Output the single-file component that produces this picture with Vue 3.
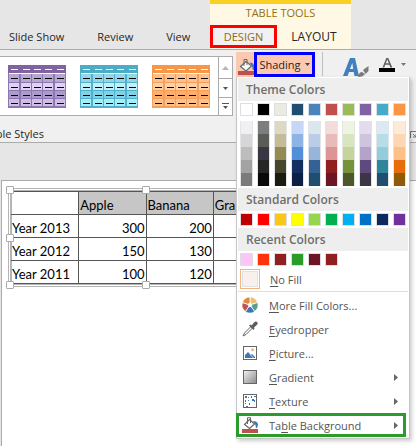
<script setup>
const tabs = ['Slide Show', 'Review', 'View']

const styles = [
  { name: 'Purple', head: '#8064a2', line: '#8f76b3', rows: ['#b7a8d0', '#ddd2f2', '#ac9bc8', '#cdbfe4'] },
  { name: 'Aqua', head: '#4bacc6', line: '#52b0cc', rows: ['#93d6e6', '#c0f0fc', '#82d2e6', '#a2f0fc'] },
  { name: 'Orange', head: '#f79646', line: '#f3a05c', rows: ['#ffc08c', '#ffcfa6', '#ffae6c', '#ffc08a'] },
]
const thumbCols = [1, 13, 24, 35, 47]
const thumbRows = [9, 18, 26, 34]

const theme = [
  { base: '#ffffff', tints: ['#f0f0f3', '#d6d6d6', '#bdbdbd', '#a3a3a3', '#7b7b7b'] },
  { base: '#000000', tints: ['#7d7d7d', '#595c57', '#3a3742', '#262626', '#0a0a0a'] },
  { base: '#ebebe0', tints: ['#dcd9c0', '#c4bc98', '#938b53', '#45462b', '#1b1c10'] },
  { base: '#1f4e70', tints: ['#c5d6f6', '#8eb4e6', '#538ed8', '#132f61', '#0c2046'] },
  { base: '#4a84bd', tints: ['#dbe7ef', '#b9cde8', '#95b6da', '#356194', '#1f4e70'] },
  { base: '#c0504d', tints: ['#f3dcd9', '#e8bab9', '#dc9594', '#911f20', '#6d1522'] },
  { base: '#9bbb59', tints: ['#edf4df', '#d7e6bd', '#c5d49b', '#76933a', '#4c5828'] },
  { base: '#8064a2', tints: ['#e4dcec', '#cdc5de', '#b3a3c9', '#5e4a7c', '#3c3545'] },
  { base: '#44abc8', tints: ['#d9eaf4', '#b7dde9', '#93cddb', '#2f869c', '#1f4e70'] },
  { base: '#fd9644', tints: ['#feead9', '#fdd6b4', '#fdc188', '#e86c0a', '#915a0a'] },
]

const standard = ['#c00000', '#ff0000', '#fac814', '#ffff00', '#96d64d', '#00b050', '#00b0f0', '#0070c6', '#0d2a5e', '#7030a0']
const recent = ['#fdc6f7', '#ff330a', '#911f20', '#2a9c2a', '#6d1522', '#911f20']

const items = [
  { icon: 'wheel', pre: '', key: 'M', post: 'ore Fill Colors...', sub: false },
  { icon: 'dropper', pre: '', key: 'E', post: 'yedropper', sub: false },
  { icon: 'picture', pre: '', key: 'P', post: 'icture...', sub: false },
  { icon: 'gradient', pre: '', key: 'G', post: 'radient', sub: true },
  { icon: 'texture', pre: '', key: 'T', post: 'exture', sub: true },
  { icon: 'bucket', pre: 'Ta', key: 'b', post: 'le Background', sub: true, marked: true },
]

const columns = ['', 'Apple', 'Banana', 'Grapes']
const records = [
  ['Year 2013', '300', '200', ''],
  ['Year 2012', '150', '130', ''],
  ['Year 2011', '100', '120', ''],
]
const handles = ['nw', 'n', 'ne', 'w', 'e', 'sw', 's', 'se']
const dots = [[2, 2], [5, 3], [8, 2], [11, 2], [2, 6], [5, 6], [9, 5], [2, 9], [6, 9], [3, 12], [11, 6]]
</script>

<template>
  <div class="app">
    <header class="tabs">
      <nav class="main-tabs">
        <button v-for="t in tabs" :key="t" class="tab" type="button">{{ t }}</button>
      </nav>
      <div class="context">
        <div class="context-title">TABLE TOOLS</div>
        <div class="context-tabs">
          <button class="ctab active" type="button">DESIGN</button>
          <button class="ctab" type="button">LAYOUT</button>
        </div>
      </div>
    </header>

    <section class="ribbon">
      <div class="styles-group">
        <div class="gallery">
          <div class="thumbs">
            <button v-for="s in styles" :key="s.name" class="thumb" type="button" :aria-label="s.name + ' table style'">
              <svg width="58" height="43" viewBox="0 0 58 43" shape-rendering="crispEdges">
                <rect width="58" height="43" :fill="s.line" />
                <rect width="58" height="8" :fill="s.head" />
                <rect x="1" y="8" width="56" height="1" fill="#fff" />
                <g v-for="(c, r) in s.rows" :key="r">
                  <rect v-for="x in thumbCols" :key="x" :x="x" :y="thumbRows[r]" width="10" :height="r ? 7 : 8" :fill="c" />
                  <rect v-for="x in thumbCols" :key="'d' + x" :x="x + 2" :y="thumbRows[r] + 4" width="7" height="1" fill="#000" />
                </g>
                <rect v-for="x in thumbCols" :key="x" :x="x + 2" y="4" width="7" height="1" fill="#fff" />
              </svg>
            </button>
          </div>
          <div class="scroll">
            <button type="button" aria-label="Scroll up"><svg width="7" height="4"><path d="M3.5 0 7 4H0z" fill="#b5b5b5" /></svg></button>
            <button type="button" aria-label="Scroll down"><svg width="5" height="3"><path d="M0 0h5L2.500 3z" fill="#555" /></svg></button>
            <button type="button" aria-label="More styles"><svg width="7" height="7"><path d="M0 0h7v1H0zM1 3h5L3.500 6z" fill="#555" /></svg></button>
          </div>
        </div>
        <div class="group-label">Table Styles</div>
      </div>

      <div class="shading">
        <button class="shade-icon" type="button" aria-label="Apply shading">
          <svg width="16" height="17" viewBox="0 0 16 17">
            <path d="M8 3.500 13.500 8 8 13 2.500 8.500z" fill="#fff" stroke="#666" stroke-width="1.200" />
            <path d="M6 8V1.500h3V7" fill="none" stroke="#666" />
            <path d="M11.500 4.500q4 0 4.500 3v4l-1 1-1-4.500z" fill="#3f77b0" />
            <rect y="13" width="16" height="4" fill="#c0504d" />
          </svg>
        </button>
        <button class="shade-label" type="button" aria-haspopup="true">
          Shading
          <svg width="5" height="3"><path d="M0 0h5L2.500 3z" fill="#444" /></svg>
        </button>

        <div class="menu">
          <h2>Theme Colors</h2>
          <div class="swatches">
            <button v-for="(c, i) in theme" :key="i" class="swatch" type="button" :aria-label="'Theme ' + c.base" :style="{ background: c.base }"></button>
          </div>
          <div class="swatches tints">
            <div v-for="(c, i) in theme" :key="i" class="tint-col">
              <button v-for="t in c.tints" :key="t" type="button" :aria-label="'Tint ' + t" :style="{ background: t }"></button>
            </div>
          </div>
          <h2>Standard Colors</h2>
          <div class="swatches">
            <button v-for="c in standard" :key="c" class="swatch" type="button" :aria-label="'Standard ' + c" :style="{ background: c }"></button>
          </div>
          <h2>Recent Colors</h2>
          <div class="swatches">
            <button v-for="(c, i) in recent" :key="i" class="swatch" type="button" :aria-label="'Recent ' + c" :style="{ background: c }"></button>
          </div>
          <button class="no-fill" type="button"><span class="no-box"></span><span><u>N</u>o Fill</span></button>
          <div class="items">
            <button v-for="m in items" :key="m.icon" class="item" :class="{ marked: m.marked }" type="button">
              <svg v-if="m.icon === 'wheel'" width="16" height="16" viewBox="0 0 16 16" stroke="#fff" stroke-width=".8">
                <path d="M8 8V0A8 8 0 0 1 15.600 5.500z" fill="#edbd72" />
                <path d="M8 8 15.600 5.500A8 8 0 0 1 12.700 14.500z" fill="#55a08c" />
                <path d="M8 8 12.700 14.500A8 8 0 0 1 3.300 14.500z" fill="#3f74b5" />
                <path d="M8 8 3.300 14.500A8 8 0 0 1 .4 5.500z" fill="#c2564e" />
                <path d="M8 8 .4 5.500A8 8 0 0 1 8 0z" fill="#dc8a3e" />
                <circle cx="8" cy="8" r="1.800" fill="#fff" />
              </svg>
              <svg v-else-if="m.icon === 'dropper'" width="16" height="16" viewBox="0 0 16 16">
                <path d="M9 5.500 2.500 12 1 15 4 13.500 10.500 7" fill="#fff" stroke="#666" />
                <path d="M7 4.500 8.500 3.500 9.500 4.500 12 1.500Q13.500 0 15 1T14.800 4L12 6.500 12.500 7.500 11.500 9z" fill="#5f5f5a" />
              </svg>
              <svg v-else-if="m.icon === 'picture'" width="16" height="16" viewBox="0 0 16 16">
                <rect x="1.500" y="1.500" width="13" height="13" fill="#fff" stroke="#666" />
                <path d="M3 13V10L6 7 9 10 10 9 13 12V13z" fill="#3f77b5" />
                <path d="M8 9.500 11.500 13" stroke="#fff" stroke-width=".7" />
                <circle cx="10.500" cy="4.800" r="1.500" fill="#e9b873" />
              </svg>
              <svg v-else-if="m.icon === 'gradient'" width="16" height="16" viewBox="0 0 16 16">
                <defs><linearGradient id="grey-ramp" x2="1" y2="1"><stop stop-color="#f4f4f4" /><stop offset="1" stop-color="#888" /></linearGradient></defs>
                <rect x="1.500" y="1.500" width="13" height="13" fill="url(#grey-ramp)" stroke="#666" />
              </svg>
              <svg v-else-if="m.icon === 'texture'" width="16" height="16" viewBox="0 0 16 16">
                <rect x="1.500" y="1.500" width="13" height="13" fill="#fff" stroke="#666" />
                <rect v-for="(d, i) in dots" :key="i" :x="d[0] + 1" :y="d[1] + 1" :width="i % 3 ? 1 : 2" :height="i % 2 ? 1 : 2" fill="#3f77b5" />
              </svg>
              <svg v-else width="16" height="16" viewBox="0 0 16 16">
                <path d="M7.500 2.500 12.500 7 7.500 11.500 2.500 7.500z" fill="#fff" stroke="#666" stroke-width="1.200" />
                <path d="M5.500 7V.7h3V6" fill="none" stroke="#666" />
                <path d="M11 4q4 0 5 3l-.5 3-1.500 1.500L13.500 8z" fill="#3f77b0" />
                <rect y="12" width="16" height="4" fill="#c0504d" />
              </svg>
              <span class="text">{{ m.pre }}<u>{{ m.key }}</u>{{ m.post }}</span>
              <svg v-if="m.sub" class="arrow" width="4" height="7"><path d="M0 0 4 3.500 0 7z" fill="#666" /></svg>
            </button>
          </div>
        </div>
      </div>

      <div class="wordart">
        <button type="button" aria-label="Quick styles">
          <svg width="28" height="19" viewBox="0 0 28 19">
            <path d="M0 18 7 0h5l4 18h-4.500l-.8-4H6l-1.500 4zM7 11h3.200L9.300 5z" fill="#3f80bf" />
            <path d="M15 19q1-5 4-5l3 2q-2 3-7 3zM20 12l5.500-4v5l-3 3z" fill="#7a7a7a" />
          </svg>
        </button>
        <button class="text-fill" type="button" aria-label="Text fill">
          <svg width="27" height="15" viewBox="0 0 27 15">
            <path d="M3.500 9.500 7.300 0h2l4 9.500h-2l-1-2.800H6.200L5.300 9.500zM6.800 5.300h3L8.300 1.600z" fill="#606060" />
            <rect y="10" width="16" height="4" fill="#000" />
            <path d="M22 5h5L24.500 8z" fill="#777" />
          </svg>
        </button>
      </div>
      <button class="launcher" type="button" aria-label="Format options">
        <svg width="7" height="7"><path d="M.5 7V.5H7M3 3l3 3M6 3v3H3" fill="none" stroke="#777" /></svg>
      </button>
    </section>

    <main class="slide">
      <div class="frame">
        <table>
          <thead>
            <tr><th v-for="c in columns" :key="c">{{ c }}</th></tr>
          </thead>
          <tbody>
            <tr v-for="r in records" :key="r[0]"><td v-for="(v, i) in r" :key="i">{{ v }}</td></tr>
          </tbody>
        </table>
        <i v-for="h in handles" :key="h" class="handle" :class="h"></i>
      </div>
    </main>
  </div>
</template>

<style>
body { background: #e6e6e6; }
</style>

<style scoped>
* { box-sizing: border-box; }
.app {
  display: flex;
  flex-direction: column;
  min-height: 100vh;
  overflow: hidden;
  background: #e6e6e6;
  color: #262626;
  font-family: "Open Sans", "Noto Sans", sans-serif;
  font-size: 12px;
}
button {
  margin: 0;
  padding: 0;
  border: 0;
  background: none;
  color: inherit;
  font: inherit;
  text-align: left;
}
svg { display: block; flex: none; }

.tabs {
  display: flex;
  height: 50px;
  border-bottom: 1px solid #ababab;
}
.main-tabs {
  display: flex;
  align-items: flex-end;
  gap: 33px;
  width: 210px;
  padding: 0 0 3px 9px;
}
.tab { height: 18px; line-height: 18px; font-size: 11px; white-space: nowrap; }
.context {
  width: 141px;
  border-top: 4px solid #fbd024;
  background: #fff8e4;
}
.context-title {
  height: 21px;
  line-height: 18px;
  font-size: 11px;
  text-align: center;
  color: #927111;
}
.context-tabs { display: flex; }
.ctab { flex: 1; height: 23px; line-height: 23px; text-align: center; font-size: 12px; }
.ctab.active {
  flex: none;
  width: 67px;
  border: 3px solid #fd0000;
  background: #f1f1f1;
  line-height: 17px;
  font-size: 11px;
  color: #8f6a12;
}

.ribbon {
  display: flex;
  height: 93px;
  padding-top: 2px;
  border-bottom: 1px solid #ababab;
  background: #f0f0f0;
}
.styles-group { width: 236px; padding-top: 4px; }
.gallery {
  display: flex;
  width: 233px;
  height: 60px;
  border: 1px solid #ababab;
  border-left: 0;
  background: #fff;
}
.thumbs { display: flex; flex: 1; gap: 14px; padding: 8px 0 0 8px; }
.thumb { height: 43px; }
.scroll {
  display: grid;
  grid-template-rows: 21px 19px 18px;
  width: 14px;
  border-left: 1px solid #ababab;
}
.scroll button { display: grid; place-items: center; }
.scroll button + button { border-top: 1px solid #ababab; }
.group-label {
  display: flex;
  justify-content: flex-end;
  width: 44px;
  margin-top: 10px;
  overflow: hidden;
  line-height: 16px;
  font-size: 11px;
  white-space: nowrap;
}

.shading { position: relative; display: flex; height: 25px; width: 79px; }
.shade-icon { width: 18px; padding: 3px 0 0 2px; background: #fbc9b0; overflow: hidden; }
.shade-label {
  display: flex;
  flex: 1;
  align-items: center;
  justify-content: center;
  gap: 4px;
  border: 3px solid #0000fe;
  background: #fbc9b0;
  font-size: 11px;
}
.wordart {
  display: flex;
  align-items: flex-start;
  gap: 8px;
  height: 24px;
  margin-left: 7px;
  padding: 6px 0 0 20px;
  border-left: 1px solid #c0c0c0;
}
.launcher { margin: 79px 0 0 auto; align-self: flex-start; width: 6px; overflow: hidden; }

.menu {
  position: absolute;
  z-index: 2;
  top: 100%;
  left: 0;
  width: 174px;
  padding: 1px;
  border: 1px solid #c6c6c6;
  border-top-width: 0;
  background: #fff;
  box-shadow: 2px 2px 4px rgba(0, 0, 0, 0.2);
  color: #555;
}
.menu h2 {
  margin: 0;
  height: 23px;
  padding-left: 8px;
  background: #eee;
  color: #6e6e6a;
  font-size: 12px;
  font-weight: 600;
  line-height: 23px;
}
.swatches { display: flex; gap: 4px; padding: 2px; }
.swatch { width: 13px; height: 13px; border: 1px solid #dcdfe2; }
.tints { padding: 3px 2px 2px; }
.tint-col { display: grid; width: 13px; border: solid #e2e4e6; border-width: 0 1px; }
.tint-col button { height: 13px; }
.no-fill { display: flex; align-items: center; gap: 10px; width: 100%; padding: 1px 2px; }
.no-box {
  width: 20px;
  height: 20px;
  border: 1px solid #f3b47f;
  background: #f9efec;
  box-shadow: inset 0 0 0 1px #fff, inset 0 0 0 2px #dfe2e5;
}
.items { margin-top: 1px; padding-top: 1px; border-top: 1px solid #dedede; }
.item {
  display: flex;
  align-items: center;
  gap: 11px;
  width: 100%;
  height: 24px;
  padding: 0 10px 0 4px;
}
.item, .no-fill { font-size: 11px; white-space: nowrap; }
.text { flex: 1; }
.item.marked {
  width: 170px;
  margin-left: -2px;
  padding: 0 5px 0 3px;
  border: 3px solid #2b9c2b;
}
u { text-underline-offset: 2px; }

.slide {
  flex: 1;
  margin: 37px 0 0 1px;
  padding: 7px 0 0 6px;
  border: solid #ababab;
  border-width: 1px 0 0 1px;
  background: #fff;
}
.frame {
  position: relative;
  width: 276px;
  padding: 2px;
  border: 1px solid #b5b5b5;
}
table {
  width: 100%;
  border-collapse: collapse;
  table-layout: fixed;
  outline: 1px solid #b5b5b5;
  color: #000;
  font-family: Lato, sans-serif;
  font-size: 13px;
}
th, td {
  height: 23px;
  padding: 3px 1px 0;
  border: 1px solid #555;
  line-height: 18px;
  font-weight: 400;
  text-align: right;
  white-space: nowrap;
}
th { background: #c6c6c6; text-align: left; }
th:first-child { background: #fff; }
td:first-child { padding-left: 0; text-align: left; }
tr > :first-child { border-left-color: #b5b5b5; }
.handle {
  position: absolute;
  width: 8px;
  height: 8px;
  border: 1px solid #ababab;
  border-radius: 1px;
  background: #fff;
}
.nw, .n, .ne { top: -3px; }
.sw, .s, .se { bottom: -3px; }
.w, .e { top: calc(50% - 4px); }
.nw, .w, .sw { left: -3px; }
.ne, .e, .se { right: -3px; }
.n, .s { left: calc(50% - 4px); }
</style>
